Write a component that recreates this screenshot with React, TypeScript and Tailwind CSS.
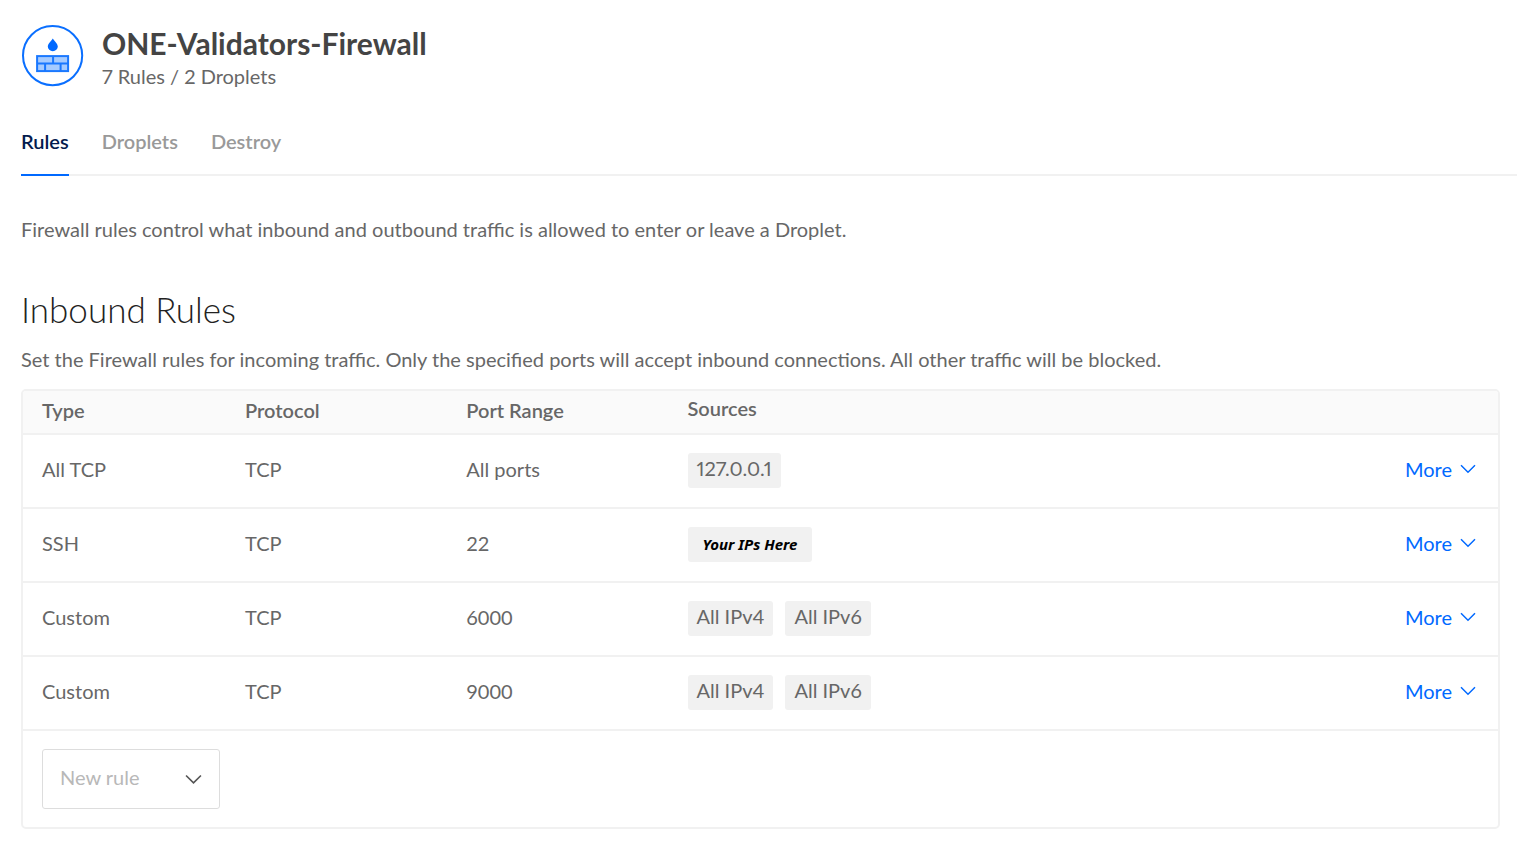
const tabs = [
  { label: "Rules", active: true },
  { label: "Droplets", active: false },
  { label: "Destroy", active: false },
];

type Rule = {
  type: string;
  protocol: string;
  ports: string;
  sources: string[];
  placeholder?: boolean;
};

const rules: Rule[] = [
  { type: "All TCP", protocol: "TCP", ports: "All ports", sources: ["127.0.0.1"] },
  { type: "SSH", protocol: "TCP", ports: "22", sources: ["Your IPs Here"], placeholder: true },
  { type: "Custom", protocol: "TCP", ports: "6000", sources: ["All IPv4", "All IPv6"] },
  { type: "Custom", protocol: "TCP", ports: "9000", sources: ["All IPv4", "All IPv6"] },
];

function FirewallIcon() {
  return (
    <svg className="size-[63px] shrink-0" viewBox="-0.6 0.4 63 63" fill="none" aria-hidden="true">
      <circle cx="31" cy="31" r="29.6" stroke="#0a6fff" strokeWidth="2" />
      <path
        d="M31.200 13.800c1.600 2.600 5 5.400 5 8.200a5 4.600 0 0 1-10 0C26.200 19.200 29.600 16.400 31.200 13.800Z"
        fill="#0069ff"
      />
      <rect x="15.500" y="31.500" width="31" height="15" fill="#a6cbff" stroke="#1a78ff" strokeWidth="2" />
      <path d="M15.500 39h31M31.500 31.500V39M23.500 39v7.500M39 39v7.500" stroke="#1a78ff" strokeWidth="2" />
    </svg>
  );
}

function Chevron({ className }: { className: string }) {
  return (
    <svg className={className} viewBox="0 0 16 10" fill="none" stroke="currentColor" aria-hidden="true">
      <path d="M1 1.200 8 8.200l7-7" strokeWidth="1.500" />
    </svg>
  );
}

function SourceTag({ text, placeholder }: { text: string; placeholder?: boolean }) {
  return placeholder ? (
    <span className="flex h-[35px] items-center rounded-[3px] bg-[#f1f1f1] px-[15px] font-['Noto_Sans','Open_Sans',sans-serif] text-[15px] font-bold text-black italic">
      {text}
    </span>
  ) : (
    <span className="flex h-[35px] items-center rounded-[3px] bg-[#f1f1f1] px-[9px] pb-1 proportional-nums">
      {text}
    </span>
  );
}

export default function App() {
  return (
    <main className="bg-white pt-[25px] pb-7 pl-[21px] font-[Lato,sans-serif] text-[20px] leading-7 text-[#676767]">
      <header className="flex items-start gap-[18px]">
        <FirewallIcon />
        <div>
          <h1 className="text-[30px] leading-[37px] font-bold text-[#444]">ONE-Validators-Firewall</h1>
          <p className="proportional-nums">7 Rules / 2 Droplets</p>
        </div>
      </header>

      <nav className="mt-7 flex gap-[33px] border-b-2 border-[#f1f1f1] font-semibold">
        {tabs.map((tab) => (
          <a
            key={tab.label}
            href={`#${tab.label.toLowerCase()}`}
            aria-current={tab.active ? "page" : undefined}
            className={
              tab.active
                ? "-mb-[2px] border-b-2 border-[#0069ff] pt-[9px] pb-[19px] text-[#031b4e]"
                : "pt-[9px] pb-[19px] text-[#999]"
            }
          >
            {tab.label}
          </a>
        ))}
      </nav>

      <p className="mt-[39px]">
        Firewall rules control what inbound and outbound traffic is allowed to enter or leave a Droplet.
      </p>

      <section className="mt-[42px] pr-[17px]">
        <h2 className="text-[35px] leading-12 font-light text-[#222]">Inbound Rules</h2>
        <p className="mt-3">
          Set the Firewall rules for incoming traffic. Only the specified ports will accept inbound connections. All
          other traffic will be blocked.
        </p>

        <div className="mt-4 overflow-hidden rounded-[5px] border-2 border-[#f1f1f1]">
          <table className="w-full table-fixed border-collapse text-left">
            <thead className="bg-[#fafafa]">
              <tr className="h-[43px] border-b-2 border-[#f1f1f1]">
                <th className="w-[203px] pb-[5px] pl-[19px] font-semibold">Type</th>
                <th className="w-[15%] pb-[5px] pl-[19px] font-semibold">Protocol</th>
                <th className="w-[15%] pb-[5px] pl-[19px] font-semibold">Port Range</th>
                <th className="pb-[9px] pl-[19px] font-semibold">Sources</th>
                <td className="w-[160px]" />
              </tr>
            </thead>
            <tbody>
              {rules.map((rule) => (
                <tr key={rule.ports} className="h-[74px] border-b-2 border-[#f1f1f1]">
                  <td className="pb-[5px] pl-[19px]">{rule.type}</td>
                  <td className="pb-[5px] pl-[19px]">{rule.protocol}</td>
                  <td className="pb-[5px] pl-[19px]">{rule.ports}</td>
                  <td className="pb-[2px] pl-[19px]">
                    <div className="flex gap-3">
                      {rule.sources.map((source) => (
                        <SourceTag key={source} text={source} placeholder={rule.placeholder} />
                      ))}
                    </div>
                  </td>
                  <td className="pr-[22px] pb-[4px]">
                    <button type="button" className="ml-auto flex items-center gap-2 text-[#0069ff]">
                      More
                      <Chevron className="h-[10px] w-4" />
                    </button>
                  </td>
                </tr>
              ))}
            </tbody>
          </table>

          <div className="px-[19px] py-[18px]">
            <div className="relative w-[178px]">
              <select
                aria-label="New rule"
                className="block h-[60px] w-full appearance-none rounded-[3px] border border-[#ddd] bg-white pr-12 pb-[5px] pl-[17px] text-[#b8b8b8]"
                defaultValue=""
              >
                <option value="">New rule</option>
              </select>
              <Chevron className="pointer-events-none absolute top-[25px] right-[18px] h-[11px] w-[17px] text-[#555]" />
            </div>
          </div>
        </div>
      </section>
    </main>
  );
}
